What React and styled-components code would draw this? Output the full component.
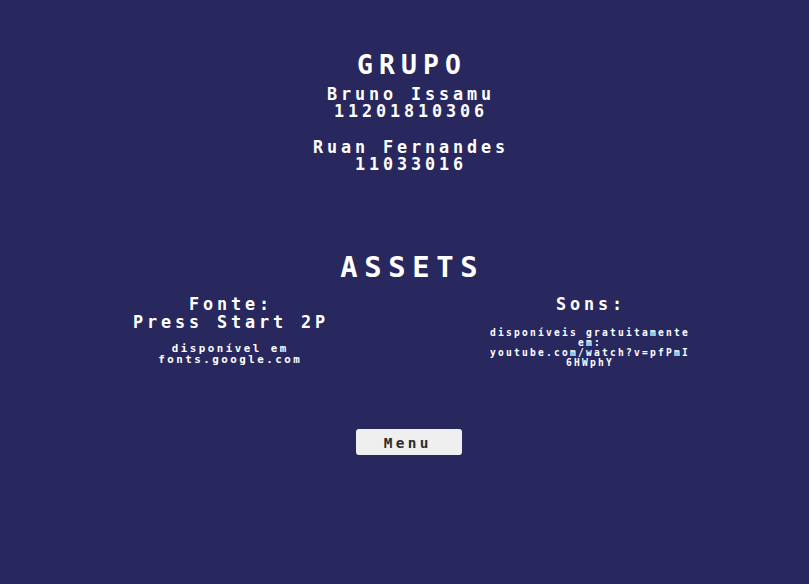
import styled, { createGlobalStyle, css } from "styled-components";

const GlobalStyle = createGlobalStyle`
  html, body {
    margin: 0;
    padding: 0;
    background-color: #29285e;
  }
`;

// Press Start 2P is not installed: DejaVu Sans Mono Bold, scaled to the same
// cap height, with letter spacing making up the 1em advance of the pixel font.
const pixelFont = (size, lineHeight) => css`
  font-family: "DejaVu Sans Mono", "Liberation Mono", monospace;
  font-weight: bold;
  font-size: ${size * 1.2}px;
  letter-spacing: ${size * 0.278}px;
  padding-left: ${size * 0.278}px;
  line-height: ${lineHeight}px;
  white-space: nowrap;
`;

const StyledCreditsScreen = styled.div`
  min-height: 584px;
  display: flex;
  flex-direction: column;
  align-items: center;
  padding: 54px 0 0 9px;
  box-sizing: border-box;
  color: #ffffff;
  text-align: center;
`;

const Title = styled.h1`
  margin: ${(p) => p.$top || 0}px 0 0;
  ${(p) => pixelFont(p.$size, p.$size)}
`;

const MemberBox = styled.div`
  margin-top: ${(p) => p.$top}px;
  ${pixelFont(14, 17)}
`;

const AssetsRow = styled.div`
  display: flex;
  gap: 120px;
  margin-top: 16px;
`;

const AssetColumn = styled.div`
  width: 240px;
  display: flex;
  flex-direction: column;
  align-items: center;
`;

const AssetHeading = styled.div`
  ${pixelFont(14, 18)}
`;

const AssetNote = styled.div`
  margin-top: ${(p) => p.$top}px;
  ${(p) => pixelFont(p.$size, p.$lineHeight)}
`;

const MenuButton = styled.button`
  margin-top: 61px;
  width: 106px;
  height: 26px;
  border: none;
  border-radius: 3px;
  background-color: #efefef;
  color: #2b2b2b;
  cursor: pointer;
  ${pixelFont(12, 26)}
`;

const members = [
  { name: "Bruno Issamu", ra: "11201810306" },
  { name: "Ruan Fernandes", ra: "11033016" },
];

export default function App() {
  return (
    <>
      <GlobalStyle />
      <StyledCreditsScreen>
        <Title $size={22}>GRUPO</Title>
        {members.map((m, i) => (
          <MemberBox key={m.ra} $top={i === 0 ? 10 : 19}>
            {m.name}
            <br />
            {m.ra}
          </MemberBox>
        ))}

        <Title $size={24} $top={82}>
          ASSETS
        </Title>
        <AssetsRow>
          <AssetColumn>
            <AssetHeading>
              Fonte:
              <br />
              Press Start 2P
            </AssetHeading>
            <AssetNote $top={13} $size={9} $lineHeight={10.5}>
              disponível em
              <br />
              fonts.google.com
            </AssetNote>
          </AssetColumn>
          <AssetColumn>
            <AssetHeading>Sons:</AssetHeading>
            <AssetNote $top={14.5} $size={8} $lineHeight={10}>
              disponíveis gratuitamente
              <br />
              em:
              <br />
              youtube.com/watch?v=pfPmI
              <br />
              6HWphY
            </AssetNote>
          </AssetColumn>
        </AssetsRow>

        <MenuButton>Menu</MenuButton>
      </StyledCreditsScreen>
    </>
  );
}
